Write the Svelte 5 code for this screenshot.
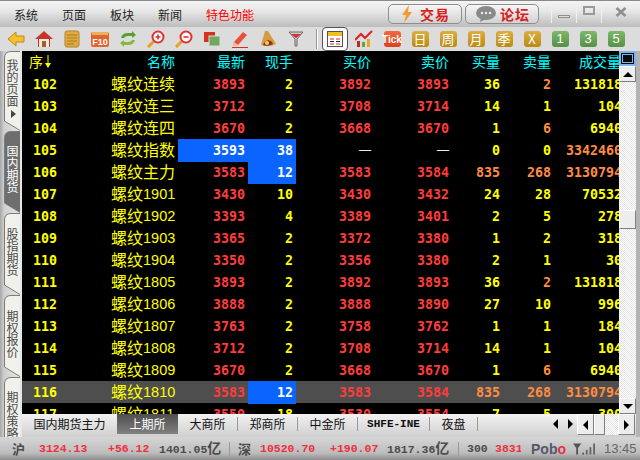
<script>
    const menus = ['系统', '页面', '板块', '新闻'];

    const sideTabs = [
        { text: '我的页面', h: 80, pad: 8, arrow: true },
        { text: '国内期货', h: 82, pad: 14, active: true },
        { text: '股指期货', h: 82, pad: 15 },
        { text: '期权报价', h: 82, pad: 15 },
        { text: '期权策略', h: 60, pad: 14, last: true }
    ];

    const periods = ['日', '周', '月', '季', 'X'];
    const minutes = ['1', '3', '5'];

    // id, name, code, last, hand, bid, ask, buyQty, sellQty, volume, orange columns
    const rows = [
        [102, '螺纹连续', '', 3893, 2, 3892, 3893, 36, 2, 131818, 's'],
        [103, '螺纹连三', '', 3712, 2, 3708, 3714, 14, 1, 104, ''],
        [104, '螺纹连四', '', 3670, 2, 3668, 3670, 1, 6, 6940, 's'],
        [105, '螺纹指数', '', 3593, 38, '—', '—', 0, 0, 3342460, 'v'],
        [106, '螺纹主力', '', 3583, 12, 3583, 3584, 835, 268, 3130794, 'bsv'],
        [107, '螺纹', '1901', 3430, 10, 3430, 3432, 24, 28, 70532, ''],
        [108, '螺纹', '1902', 3393, 4, 3389, 3401, 2, 5, 278, ''],
        [109, '螺纹', '1903', 3365, 2, 3372, 3380, 1, 2, 318, ''],
        [110, '螺纹', '1904', 3350, 2, 3356, 3380, 2, 1, 30, ''],
        [111, '螺纹', '1805', 3893, 2, 3892, 3893, 36, 2, 131818, 's'],
        [112, '螺纹', '1806', 3888, 2, 3888, 3890, 27, 10, 996, ''],
        [113, '螺纹', '1807', 3763, 2, 3758, 3762, 1, 1, 184, ''],
        [114, '螺纹', '1808', 3712, 2, 3708, 3714, 14, 1, 104, ''],
        [115, '螺纹', '1809', 3670, 2, 3668, 3670, 1, 6, 6940, 's'],
        [116, '螺纹', '1810', 3583, 12, 3583, 3584, 835, 268, 3130794, 'bsv'],
        [117, '螺纹', '1811', 3550, 18, 3530, 3554, 7, 5, 300, '']
    ];

    const exchanges = ['大商所', '郑商所', '中金所'];

    function tabPath(h, last) {
        if (last) return `M0.5 ${h} V7 Q0.5 0.5 7 0.5 H16`;
        return `M16 ${h - 0.5} L0.5 ${h - 10} V7 Q0.5 0.5 7 0.5 H16`;
    }
</script>

<div class="app">
    <header class="titlebar">
        <nav class="menu">
            {#each menus as m}
                <span>{m}</span>
            {/each}
            <span class="special">特色功能</span>
        </nav>
        <div class="actions">
            <div class="pill trade">
                <svg width="12" height="18" viewBox="0 0 12 18"><path d="M8 0 L1 10 H5 L3 18 L11 7 H7 Z" fill="#f09a30" /></svg>
                <span>交易</span>
            </div>
            <div class="pill forum">
                <svg width="20" height="16" viewBox="0 0 20 16"><ellipse cx="10" cy="7" rx="10" ry="7" fill="#8a8a8a" /><path d="M5 11 L4 16 L10 13 Z" fill="#8a8a8a" /><circle cx="6" cy="7" r="1.2" fill="#eee" /><circle cx="10" cy="7" r="1.2" fill="#eee" /><circle cx="14" cy="7" r="1.2" fill="#eee" /></svg>
                <span>论坛</span>
            </div>
        </div>
        <div class="winbtns">
            <div class="winbtn"><i class="min"></i></div>
            <div class="winbtn"><i class="max"></i></div>
            <div class="winbtn"><svg width="12" height="10" viewBox="0 0 12 10"><path d="M1.5 1 L10.5 9 M10.5 1 L1.5 9" stroke="#8f8f8f" stroke-width="2.6" fill="none" /></svg></div>
        </div>
    </header>

    <div class="toolbar">
        <div class="tool"><svg width="18" height="16" viewBox="0 0 18 16"><path d="M9 1 L1 8 L9 15 V11 H17 V5 H9 Z" fill="#f5c030" stroke="#c08a10" /></svg></div>
        <div class="tool"><svg width="18" height="18" viewBox="0 0 18 18"><path d="M9 1 L0 9 H3 V17 H15 V9 H18 Z" fill="#c8342c" /><rect x="4" y="9" width="10" height="8" fill="#f0ead8" /><rect x="7" y="11" width="4" height="6" fill="#a06030" /></svg></div>
        <div class="tool"><svg width="16" height="18" viewBox="0 0 16 18"><rect x="1" y="1" width="14" height="16" rx="2" fill="#e0aa40" stroke="#b88426" /><path d="M3 5 H13 M3 8 H13 M3 11 H13 M3 14 H10" stroke="#a87a22" /></svg></div>
        <div class="tool"><svg width="18" height="16" viewBox="0 0 18 16"><rect x="0" y="1" width="18" height="15" rx="2" fill="#e2632c" /><rect x="1" y="1" width="16" height="3" fill="#e8b060" /><text x="9" y="14" class="f10">F10</text></svg></div>
        <div class="tool"><svg width="18" height="16" viewBox="0 0 18 16"><path d="M2 7 Q3 2 9 2 H13 V0 L17 4 L13 7 V5 H9 Q6 5 5 7 Z" fill="#5aa030" /><path d="M16 9 Q15 14 9 14 H5 V16 L1 12 L5 9 V11 H9 Q12 11 13 9 Z" fill="#86b840" /></svg></div>
        <div class="tool"><svg width="18" height="18" viewBox="0 0 18 18"><path d="M1 17 L7 11" stroke="#e8a020" stroke-width="3" /><circle cx="11" cy="7" r="5.5" fill="#fff" stroke="#e03030" stroke-width="2" /><path d="M8.5 7 H13.5 M11 4.5 V9.5" stroke="#e03030" stroke-width="1.6" /></svg></div>
        <div class="tool"><svg width="18" height="18" viewBox="0 0 18 18"><path d="M1 17 L7 11" stroke="#e8a020" stroke-width="3" /><circle cx="11" cy="7" r="5.5" fill="#fff" stroke="#e03030" stroke-width="2" /><path d="M8.5 7 H13.5" stroke="#e03030" stroke-width="1.6" /></svg></div>
        <div class="tool"><svg width="18" height="16" viewBox="0 0 18 16"><rect x="1" y="1" width="11" height="10" fill="#d83020" /><rect x="6" y="5" width="11" height="10" fill="#70a860" stroke="#d8e0d0" /></svg></div>
        <div class="tool"><svg width="18" height="18" viewBox="0 0 18 18"><path d="M3 12 L12 2 L16 5 L7 15 L2 16 Z" fill="#e8503a" /><path d="M3 12 L7 15 L2 16 Z" fill="#e8c8a0" /><path d="M1 17.5 H17" stroke="#d03020" /></svg></div>
        <div class="tool"><svg width="18" height="18" viewBox="0 0 18 18"><path d="M6 1 L9 1 L17 14 Q10 18 2 15 Z" fill="#d89a40" /><path d="M5 13 Q9 8 13 12 L14 14 Q9 17 4 15 Z" fill="#8a3020" /><circle cx="8" cy="13" r="2" fill="#f0d060" /></svg></div>
        <div class="tool"><svg width="16" height="18" viewBox="0 0 16 18"><path d="M1 2 H15 L9 9 V16 H7 V9 Z" fill="#c8c8c8" stroke="#6c6c6c" /><path d="M3 4 H13 L8 8 Z" fill="#e02838" /></svg></div>
        <div class="sep"></div>
        <div class="tool selected"><svg width="16" height="16" viewBox="0 0 16 16"><rect x="0.5" y="0.5" width="15" height="15" fill="#fff" stroke="#555" /><rect x="1" y="1" width="14" height="4" fill="#f0c020" /><path d="M3 8 H7 M9 8 H13 M3 13 H7 M9 13 H13" stroke="#e02020" /><path d="M3 10.500 H7 M9 10.500 H13" stroke="#222" /></svg></div>
        <div class="tool"><svg width="18" height="18" viewBox="0 0 18 18"><rect x="2" y="11" width="3" height="6" fill="#b03020" /><rect x="7" y="12" width="3" height="5" fill="#70a040" /><rect x="12" y="9" width="3" height="8" fill="#e8a820" /><path d="M0 10 L6 4 L10 8 L17 1" stroke="#e02020" stroke-width="2" fill="none" /></svg></div>
        <div class="tool"><span class="badge tick">Tick</span></div>
        {#each periods as p}
            <div class="tool"><span class="badge gold">{p}</span></div>
        {/each}
        {#each minutes as n}
            <div class="tool"><span class="badge green">{n}</span></div>
        {/each}
    </div>

    <div class="main">
        <aside class="side">
            {#each sideTabs as t}
                <div class="sidetab" class:active={t.active} style="height:{t.h}px">
                    <svg class="tabshape" width="16" height={t.h} viewBox="0 0 16 {t.h}">
                        <path d="{tabPath(t.h, t.last)} {t.last ? `V${t.h} Z` : 'Z'}" class="fill" />
                        <path d={tabPath(t.h, t.last)} class="line" />
                    </svg>
                    <span class="tabtext" style="padding-top:{t.pad}px">{t.text}</span>
                    {#if t.arrow}<i class="tabarrow"></i>{/if}
                </div>
            {/each}
        </aside>

        <div class="body">
            <div class="upper">
                <div class="table">
                    <div class="row head">
                        <span class="seq">序<svg width="6" height="14" viewBox="0 0 6 14"><path d="M3 0 V9" stroke="#ff0" /><path d="M0 8 H6 L3 13 Z" fill="#ff0" /></svg></span>
                        <span>名称</span>
                        <span>最新</span>
                        <span>现手</span>
                        <span>买价</span>
                        <span>卖价</span>
                        <span>买量</span>
                        <span>卖量</span>
                        <span class="volhead">成交量</span>
                    </div>
                    {#each rows as r}
                        <div class="row" class:current={r[0] === 116}>
                            <span class="id">{r[0]}</span>
                            <span class="name">{r[1]}<em>{r[2]}</em></span>
                            <span class="num red" class:flash={r[0] === 105}>{r[3]}</span>
                            <span class="num" class:flash={r[0] === 105 || r[0] === 106 || r[0] === 116}>{r[4]}</span>
                            <span class="num red" class:dash={r[5] === '—'}>{r[5]}</span>
                            <span class="num red" class:dash={r[6] === '—'}>{r[6]}</span>
                            <span class="num" class:orange={r[10].includes('b')}>{r[7]}</span>
                            <span class="num" class:orange={r[10].includes('s')}>{r[8]}</span>
                            <span class="num vol" class:orange={r[10].includes('v')}>{r[9]}</span>
                        </div>
                    {/each}
                </div>
                <div class="vscroll">
                    <div class="corner"><i></i></div>
                    <div class="sbtn"><i class="up"></i></div>
                    <div class="track"><div class="thumb"></div></div>
                    <div class="sbtn"><i class="down"></i></div>
                </div>
            </div>

            <div class="tabs">
                <span class="tab first">国内期货主力</span>
                <span class="tab on">上期所</span>
                {#each exchanges as e}
                    <span class="tab ex">{e}</span>
                {/each}
                <span class="tab ine">SHFE-INE</span>
                <span class="tab night">夜盘</span>
                <span class="mini"><i class="left"></i><i class="right"></i></span>
                <div class="hscroll">
                    <div class="sbtn h"><i class="left"></i></div>
                    <div class="hthumb"></div>
                    <div class="htrack"></div>
                    <div class="sbtn h"><i class="right"></i></div>
                </div>
            </div>
        </div>
        <div class="edge"></div>
    </div>

    <footer class="status">
        <b class="cn" style="width:27px">沪</b>
        <b class="rise" style="width:69px">3124.13</b>
        <b class="rise" style="width:51px">+56.12</b>
        <b class="gray" style="width:70px">1401.05<u>亿</u></b>
        <i class="vsep"></i>
        <b class="cn" style="width:22px">深</b>
        <b class="rise" style="width:70px">10520.70</b>
        <b class="rise" style="width:57px">+190.07</b>
        <b class="gray" style="width:71px">1817.36<u>亿</u></b>
        <i class="vsep"></i>
        <b class="gray" style="width:28px">300</b>
        <b class="rise clip" style="width:26px">3831</b>
        <span class="pobo">Pob<span>o</span></span>
        <svg class="signal" width="22" height="14" viewBox="0 0 24 14"><path d="M0 1 H9 L5.500 6 V13 H3.500 V6 Z" fill="#555" /><rect x="10" y="11" width="2" height="2" fill="#555" /><rect x="14" y="8" width="2" height="5" fill="#666" /><rect x="18" y="5" width="2" height="8" fill="#666" /><rect x="22" y="1" width="2" height="12" fill="#666" /></svg>
        <span class="clock">13:45</span>
    </footer>
</div>

<style>
    :global(body) {
        margin: 0;
    }

    .app {
        width: 640px;
        height: 460px;
        display: flex;
        flex-direction: column;
        overflow: hidden;
        font-family: "Noto Sans CJK SC", "Liberation Sans", sans-serif;
        background: #c4c4c4;
    }

    .titlebar {
        height: 27px;
        display: flex;
        align-items: center;
        background: linear-gradient(#f4f4f4, #e6e6e6 40%, #bdbdbd);
        border-top: 1px solid #8a8a8a;
        box-sizing: border-box;
    }

    .menu {
        display: flex;
        gap: 24px;
        padding-left: 14px;
        width: 388px;
        flex: none;
        box-sizing: border-box;
        font-size: 12px;
        color: #222;
    }

    .special {
        color: #f00;
    }

    .actions {
        display: flex;
        gap: 3px;
        flex: none;
    }

    .pill {
        height: 20px;
        box-sizing: border-box;
        border: 1px solid #8e8e8e;
        border-radius: 5px;
        background: linear-gradient(#f6f6f6, #d2d2d2);
        display: flex;
        align-items: center;
        font-size: 14px;
        font-weight: 700;
        color: #d81e1e;
        letter-spacing: 1px;
    }

    .trade {
        width: 74px;
        gap: 7px;
        padding-left: 12px;
    }

    .forum {
        width: 74px;
        gap: 4px;
        padding-left: 10px;
    }

    .winbtns {
        display: flex;
        margin-left: 12px;
        height: 26px;
        flex: none;
    }

    .winbtn {
        width: 25px;
        height: 22px;
        display: flex;
        align-items: center;
        justify-content: center;
        border-left: 1px solid #f0f0f0;
        box-sizing: border-box;
    }

    .winbtn:last-child {
        width: 38px;
    }

    .min {
        width: 12px;
        height: 3px;
        box-sizing: border-box;
        border: 1px solid #8f8f8f;
        background: #ddd;
        margin-top: 8px;
    }

    .max {
        width: 12px;
        height: 9px;
        box-sizing: border-box;
        border: 2px solid #9a9a9a;
        margin-top: -4px;
    }

    .toolbar {
        height: 24px;
        display: flex;
        align-items: center;
        padding-left: 2px;
        background: #dcdcdc;
        box-sizing: border-box;
    }

    .tool {
        width: 28px;
        height: 24px;
        flex: none;
        display: flex;
        align-items: center;
        justify-content: center;
    }

    .f10 {
        font: 700 9px "Liberation Sans", sans-serif;
        fill: #fff;
        text-anchor: middle;
    }

    .sep {
        width: 2px;
        height: 20px;
        margin: 0 4px 0 6px;
        background: #9a9a9a;
        border-right: 1px solid #fff;
        box-sizing: border-box;
    }

    .tool.selected {
        width: 26px;
        height: 24px;
        box-sizing: border-box;
        background: #fbfbfb;
        border: 1px solid #555;
        border-radius: 4px;
        margin-right: 2px;
    }

    .badge {
        width: 17px;
        height: 16px;
        border-radius: 3px;
        display: flex;
        align-items: center;
        justify-content: center;
        color: #fff;
        font-size: 13px;
        line-height: 16px;
    }

    .tick {
        background: linear-gradient(#f06a3c, #e0401c);
        font: 700 10px "Liberation Sans", sans-serif;
    }

    .gold {
        background: linear-gradient(#dcae40, #bb8a14);
    }

    .green {
        background: linear-gradient(#80b868, #559048);
        font-family: "Liberation Sans", sans-serif;
    }

    .main {
        flex: 1;
        display: flex;
        min-height: 0;
    }

    .side {
        width: 22px;
        flex: none;
        display: flex;
        flex-direction: column;
        padding-left: 4px;
        box-sizing: border-box;
        background: linear-gradient(90deg, #a6a6a6, #cfcfcf 4px, #e8e8e8);
        overflow: hidden;
    }

    .sidetab {
        position: relative;
        width: 16px;
        flex: none;
        overflow: hidden;
    }

    .tabshape {
        position: absolute;
        inset: 0;
    }

    .fill {
        fill: #f1f1ec;
    }

    .line {
        fill: none;
        stroke: #7a7a7a;
    }

    .active .fill {
        fill: #6e6e6e;
    }

    .tabtext {
        position: relative;
        display: block;
        width: 16px;
        font-size: 12px;
        line-height: 16px;
        white-space: nowrap;
        writing-mode: vertical-rl;
        text-orientation: upright;
        color: #4a4a4a;
    }

    .active .tabtext {
        color: #fff;
    }

    .tabarrow {
        position: absolute;
        left: 7px;
        bottom: 13px;
        width: 0;
        height: 0;
        border-left: 5px solid #444;
        border-top: 4px solid transparent;
        border-bottom: 4px solid transparent;
    }

    .body {
        flex: 1;
        display: flex;
        flex-direction: column;
        min-width: 0;
    }

    .upper {
        height: 363px;
        display: flex;
    }

    .table {
        width: 597px;
        height: 363px;
        overflow: hidden;
        background: #000;
    }

    .row {
        height: 22px;
        display: grid;
        grid-template-columns: 89px 67px 70px 48px 78px 78px 51px 51px 65px;
        align-items: stretch;
        color: #ff0;
        font: 700 13.3px/23px "DejaVu Sans Mono", monospace;
    }

    .row > span {
        text-align: right;
        padding-right: 3px;
        white-space: nowrap;
    }

    .row.current {
        background: #4e4e4e;
    }

    .head {
        color: #0ff;
        font: 400 14px/20px "Noto Sans CJK SC", sans-serif;
    }

    .head .seq {
        text-align: left;
        padding-left: 7px;
        color: #ff0;
    }

    .seq svg {
        margin-left: 2px;
        vertical-align: -2px;
    }

    .row > .volhead {
        padding-right: 0;
        margin-right: -2px;
    }

    .row > .id {
        text-align: left;
        padding-left: 11px;
        padding-right: 0;
    }

    .row > .name {
        text-align: left;
        padding-right: 0;
        font: 400 16px/21px "Noto Sans CJK SC", sans-serif;
    }

    .name em {
        font: 400 14.5px/21px "Liberation Sans", sans-serif;
        vertical-align: 1px;
    }

    .red {
        color: #ff3c3c;
    }

    .orange {
        color: #ff8c42;
    }

    .row > .flash {
        background: #0a64ff;
        color: #fff;
    }

    .row > .dash {
        color: #eee;
        font: 400 12px/22px "Liberation Sans", sans-serif;
    }

    .row > .vol {
        padding-right: 0;
        margin-right: -3px;
    }

    .vscroll {
        width: 17px;
        display: flex;
        flex-direction: column;
        background: #fff;
    }

    .corner {
        height: 15px;
        box-sizing: border-box;
        border: 2px solid #7eb4f0;
        background: #0a0a0a;
        display: flex;
        align-items: center;
        justify-content: center;
    }

    .corner i {
        width: 9px;
        height: 7px;
        border: 1px solid #7eb4f0;
    }

    .sbtn {
        height: 16px;
        flex: none;
        display: flex;
        align-items: center;
        justify-content: center;
        box-sizing: border-box;
        background: #ededed;
        border: 1px solid;
        border-color: #fff #808080 #808080 #fff;
    }

    .track {
        flex: 1;
        padding-top: 128px;
        background: repeating-conic-gradient(#e4e4e4 0 25%, #fff 0 50%) 0 0 / 2px 2px;
    }

    .thumb {
        height: 19px;
        box-sizing: border-box;
        background: #ededed;
        border: 1px solid;
        border-color: #fff #808080 #808080 #fff;
    }

    .up, .down, .left, .right {
        width: 0;
        height: 0;
        display: block;
        border: 4px solid transparent;
    }

    i.up {
        border-top-width: 0;
        border-bottom: 5px solid #000;
        border-left-width: 5px;
        border-right-width: 5px;
    }

    i.down {
        border-bottom-width: 0;
        border-top: 5px solid #000;
        border-left-width: 5px;
        border-right-width: 5px;
    }

    i.left {
        border-left-width: 0;
        border-right: 5px solid #000;
        border-top-width: 5px;
        border-bottom-width: 5px;
    }

    i.right {
        border-right-width: 0;
        border-left: 5px solid #000;
        border-top-width: 5px;
        border-bottom-width: 5px;
    }

    .tabs {
        height: 23px;
        display: flex;
        align-items: flex-start;
        background: linear-gradient(#f2f2f2, #cfcfcf);
        font-size: 12px;
        line-height: 20px;
        color: #111;
    }

    .tab {
        height: 20px;
        flex: none;
        text-align: center;
        box-sizing: border-box;
    }

    .tab.first {
        width: 95px;
    }

    .tab.on {
        width: 61px;
        color: #fff;
        background: linear-gradient(#4f4f4f, #808080);
    }

    .tab.ex {
        width: 60px;
        border-right: 1px solid #999;
        height: 14px;
        margin-top: 3px;
        line-height: 14px;
    }

    .tab.ine {
        width: 72px;
        height: 14px;
        margin-top: 3px;
        border-right: 1px solid #999;
        font: 700 11px/14px "Liberation Mono", monospace;
    }

    .tab.night {
        width: 48px;
        height: 14px;
        margin-top: 3px;
        line-height: 14px;
        border-right: 1px solid #999;
    }

    .mini {
        display: flex;
        gap: 10px;
        flex: none;
        margin: 5px 0 0 75px;
    }

    .hscroll {
        display: flex;
        flex: none;
        margin-left: 4px;
        height: 21px;
    }

    .sbtn.h {
        width: 17px;
        height: 21px;
    }

    .hthumb {
        width: 11px;
        box-sizing: border-box;
        background: #ededed;
        border: 1px solid;
        border-color: #fff #808080 #808080 #fff;
    }

    .htrack {
        width: 13px;
        background: repeating-conic-gradient(#e4e4e4 0 25%, #fff 0 50%) 0 0 / 2px 2px;
    }

    .edge {
        width: 4px;
        flex: none;
        background: #b4b4b4;
    }

    .status {
        height: 23px;
        display: flex;
        align-items: center;
        padding-left: 12px;
        box-sizing: border-box;
        background: linear-gradient(#d6d6d6, #bcbcbc 70%, #8c8c8c);
        font: 700 11.5px/20px "Liberation Mono", monospace;
        white-space: nowrap;
    }

    .status b {
        flex: none;
        display: block;
    }

    .status b.rise {
        color: #f03040;
    }

    .gray, .cn {
        color: #4c4c4c;
    }

    .status b.cn {
        font: 700 13px/20px "Noto Sans CJK SC", sans-serif;
    }

    .gray u {
        text-decoration: none;
        font: 700 14px/20px "Noto Sans CJK SC", sans-serif;
    }

    .clip {
        overflow: hidden;
        margin-right: 10px;
    }

    .vsep {
        width: 1px;
        height: 14px;
        flex: none;
        margin-right: 8px;
        background: #999;
    }

    .pobo {
        width: 42px;
        flex: none;
        font: 700 14px/20px "Liberation Sans", sans-serif;
        color: #54586c;
    }

    .pobo span {
        color: #e83040;
    }

    .signal {
        flex: none;
    }

    .clock {
        margin-left: 9px;
        font: 400 13px/20px "Liberation Sans", sans-serif;
        color: #666;
    }
</style>
